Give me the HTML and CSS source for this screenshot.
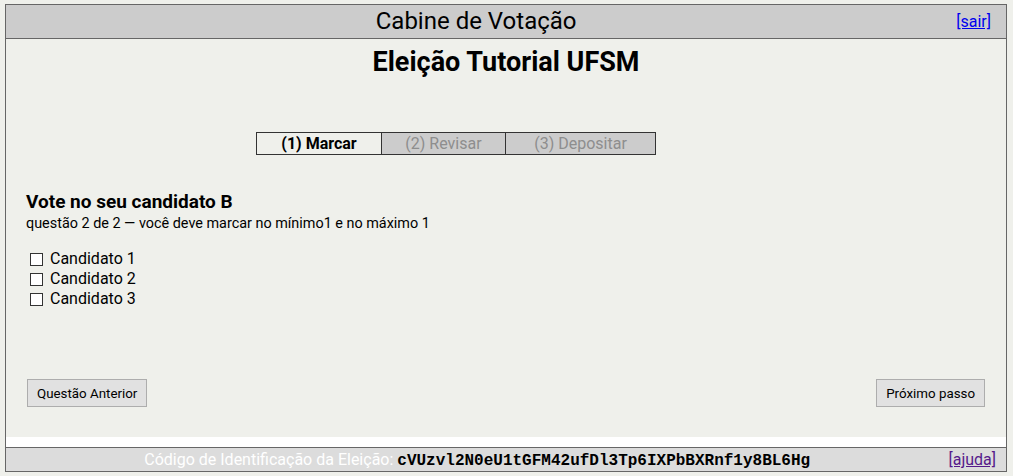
FILE: index.html
```html
<!DOCTYPE html>
<html lang="pt-BR">
<head>
<meta charset="utf-8">
<title>Cabine de Votação</title>
<link rel="stylesheet" href="styles.css">
</head>
<body>
<div class="booth">
  <div class="header">
    <a class="header-link" href="#">[sair]</a>
    <div class="header-title">Cabine de Votação</div>
  </div>
  <div class="content">
    <h1 class="election-title">Eleição Tutorial UFSM</h1>
    <div class="progress">
      <div class="step step-active">(1) Marcar</div>
      <div class="step step-2">(2) Revisar</div>
      <div class="step step-3">(3) Depositar</div>
    </div>
    <h2 class="question-title">Vote no seu candidato B</h2>
    <div class="question-info">questão 2 de 2 — você deve marcar no mínimo1 e no máximo 1</div>
    <ul class="answers">
      <li class="answer"><span class="box"></span>Candidato 1</li>
      <li class="answer"><span class="box"></span>Candidato 2</li>
      <li class="answer"><span class="box"></span>Candidato 3</li>
    </ul>
    <div class="nav">
      <button class="btn">Questão Anterior</button>
      <button class="btn">Próximo passo</button>
    </div>
  </div>
  <div class="spacer"></div>
  <div class="footer">
    <a class="footer-link" href="#">[ajuda]</a>
    <div class="footer-text">Código de Identificação da Eleição: <span class="code">cVUzvl2N0eU1tGFM42ufDl3Tp6IXPbBXRnf1y8BL6Hg</span></div>
  </div>
</div>
</body>
</html>
```
FILE: styles.css
```css
html, body {
  background: #eff0eb;
}
body {
  margin: 4px 6px 0 5px;
  font-family: Roboto, "Liberation Sans", sans-serif;
  color: #000;
}
.booth {
  border: 1px solid #666;
  background: #fff;
}
.header {
  background: #cccccc;
  border-bottom: 1px solid #666;
  height: 33px;
}
.header-link {
  float: right;
  margin: 0 15px 0 10px;
  font-size: 16px;
  line-height: 33px;
  color: #0000ee;
}
.header-title {
  text-align: center;
  font-size: 24px;
  line-height: 33px;
}
.content {
  background: #eff0eb;
  padding: 8px 20px 30px 20px;
}
.election-title {
  margin: 0;
  text-align: center;
  font-size: 27px;
  line-height: 30px;
  font-weight: bold;
}
.progress {
  display: flex;
  width: 398px;
  margin: 55px 0 0 230px;
  border: 1px solid #333;
}
.step {
  text-align: center;
  font-size: 16px;
  line-height: 21px;
  background: #cccccc;
  color: #8e8e8e;
  border-left: 1px solid #333;
}
.step-active {
  width: 124px;
  border-left: 0;
  background: #eff0eb;
  color: #000;
  font-weight: bold;
}
.step-2 { width: 123px; }
.step-3 { width: 149px; }
.question-title {
  margin: 35px 0 0 0;
  font-size: 19px;
  line-height: 24px;
  font-weight: bold;
}
.question-info {
  font-size: 14.4px;
  line-height: 20px;
}
.answers {
  list-style: none;
  margin: 15px 0 0 4px;
  padding: 0;
}
.answer {
  display: flex;
  align-items: center;
  font-size: 16px;
  line-height: 20px;
}
.box {
  width: 11px;
  height: 11px;
  border: 1px solid #333;
  background: #fff;
  margin-right: 7px;
}
.nav {
  display: flex;
  justify-content: space-between;
  margin: 70px 1px 0 1px;
}
.btn {
  font-family: Roboto, "Liberation Sans", sans-serif;
  font-size: 13.333px;
  height: 28px;
  padding: 0 9px;
  background: #e1e1e1;
  border: 1px solid #adadad;
  color: #000;
}
.spacer {
  height: 10px;
  background: #fff;
}
.footer {
  background: #dcdcdc;
  border-top: 1px solid #666;
  height: 23px;
}
.footer-link {
  float: right;
  margin-right: 10px;
  font-size: 16px;
  line-height: 23px;
  color: #551a8b;
}
.footer-text {
  text-align: center;
  font-size: 16px;
  line-height: 23px;
  color: #fff;
}
.code {
  font-family: "Liberation Mono", monospace;
  font-weight: bold;
  font-size: 16px;
  color: #000;
}
```
